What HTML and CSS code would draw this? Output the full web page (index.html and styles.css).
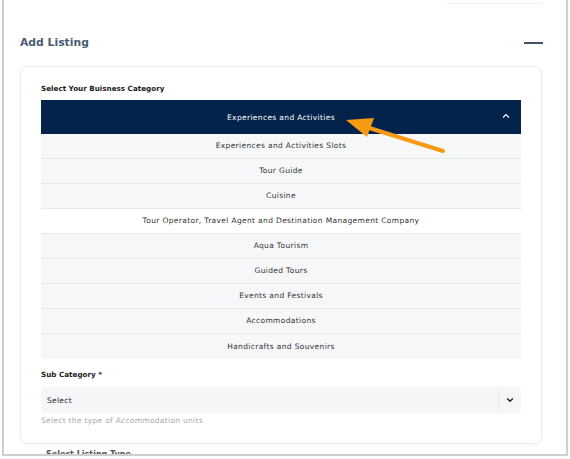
FILE: index.html
```html
<!DOCTYPE html>
<html lang="en">
<head>
  <meta charset="UTF-8">
  <title>Add Listing</title>
  <link rel="stylesheet" href="styles.css">
</head>
<body>

  <div class="frame">
    <div class="top-tab"></div>

    <div class="section-head">
      <h2>Add Listing</h2>
      <span class="collapse"></span>
    </div>

    <div class="card">
      <div class="label">Select Your Buisness Category</div>

      <div class="dropdown">
        <div class="dropdown-head">
          <span>Experiences and Activities</span>
          <svg class="chev" width="8" height="6" viewBox="0 0 8 6">
            <path d="M1 4.5 L4 1.5 L7 4.5" fill="none" stroke="#fff" stroke-width="1.1"/>
          </svg>
        </div>
        <div class="option">Experiences and Activities Slots</div>
        <div class="option">Tour Guide</div>
        <div class="option">Cuisine</div>
        <div class="option hover">Tour Operator, Travel Agent and Destination Management Company</div>
        <div class="option">Aqua Tourism</div>
        <div class="option">Guided Tours</div>
        <div class="option">Events and Festivals</div>
        <div class="option">Accommodations</div>
        <div class="option">Handicrafts and Souvenirs</div>
      </div>

      <div class="label sub">Sub Category *</div>
      <div class="select">
        <span>Select</span>
        <span class="select-arrow">
          <svg width="8" height="6" viewBox="0 0 8 6">
            <path d="M1.2 1.5 L4 4.2 L6.8 1.5" fill="none" stroke="#222" stroke-width="1.5"/>
          </svg>
        </span>
      </div>
      <div class="hint">Select the type of Accommodation units</div>
    </div>

    <div class="next-label">Select Listing Type</div>

    <svg class="pointer" width="110" height="45" viewBox="0 0 110 45">
      <line x1="102" y1="38" x2="22" y2="13" stroke="#f79a12" stroke-width="4" stroke-linecap="round"/>
      <polygon points="5,7 33,5 26,24" fill="#f79a12"/>
    </svg>
  </div>

</body>
</html>
```

FILE: styles.css
```css
body {
  margin: 0;
  background: #fff;
  font-family: 'DejaVu Sans', sans-serif;
}

.frame {
  position: relative;
  box-sizing: border-box;
  margin-left: 2px;
  width: 566px;
  height: 456px;
  padding: 0 24px 0 16px;
  overflow: hidden;
  border: 2px solid #cfcfcf;
  border-top: none;
}

.top-tab {
  margin-left: 423px;
  width: 100px;
  height: 3px;
  border-bottom: 1px solid #f0f1f3;
  border-radius: 0 0 6px 6px;
}

.section-head {
  display: flex;
  align-items: center;
  justify-content: space-between;
  margin-top: 30px;
  height: 17px;
}

.section-head h2 {
  margin: 0;
  font-size: 10.8px;
  font-weight: 700;
  color: #4b5b76;
}

.collapse {
  display: block;
  width: 19px;
  height: 2px;
  margin-right: -1px;
  background: #3f5068;
}

.card {
  margin-top: 15px;
  border: 1px solid #ececec;
  border-radius: 7px;
  padding: 16px 20px 18px;
  box-shadow: 0 1px 3px rgba(0, 0, 0, 0.03);
}

.label {
  height: 12px;
  line-height: 12px;
  font-size: 7.2px;
  font-weight: 700;
  color: #1c1c1c;
}

.dropdown {
  margin-top: 5px;
}

.dropdown-head {
  position: relative;
  display: flex;
  align-items: center;
  justify-content: center;
  height: 34px;
  background: #03234b;
  color: #fff;
  font-size: 7.5px;
  letter-spacing: 0.35px;
}

.chev {
  position: absolute;
  right: 11px;
  top: 13px;
}

.option {
  box-sizing: border-box;
  height: 25px;
  line-height: 24px;
  border-bottom: 1px solid #e7e9ec;
  background: #f6f7f9;
  text-align: center;
  font-size: 7.5px;
  letter-spacing: 0.35px;
  color: #333;
}

.option:last-child {
  border-bottom: none;
  line-height: 25px;
}

.option.hover {
  background: #fff;
}

.label.sub {
  margin-top: 10px;
  font-weight: 600;
}

.select {
  display: flex;
  align-items: center;
  justify-content: space-between;
  margin-top: 6px;
  height: 26px;
  padding-left: 6px;
  background: #f5f6f8;
  border-radius: 3px;
  font-size: 7.5px;
  letter-spacing: 0.3px;
  color: #222;
}

.select-arrow {
  display: flex;
  align-items: center;
  justify-content: center;
  width: 22px;
  height: 18px;
  border-left: 1px solid #e8e9eb;
}

.hint {
  margin-top: 3px;
  font-size: 7.5px;
  letter-spacing: 0.3px;
  color: #a8a8a8;
}

.next-label {
  margin-top: 6px;
  padding-left: 26px;
  font-size: 8px;
  line-height: 10px;
  font-weight: 600;
  color: #555;
}

.pointer {
  position: absolute;
  left: 337px;
  top: 113px;
}
```
